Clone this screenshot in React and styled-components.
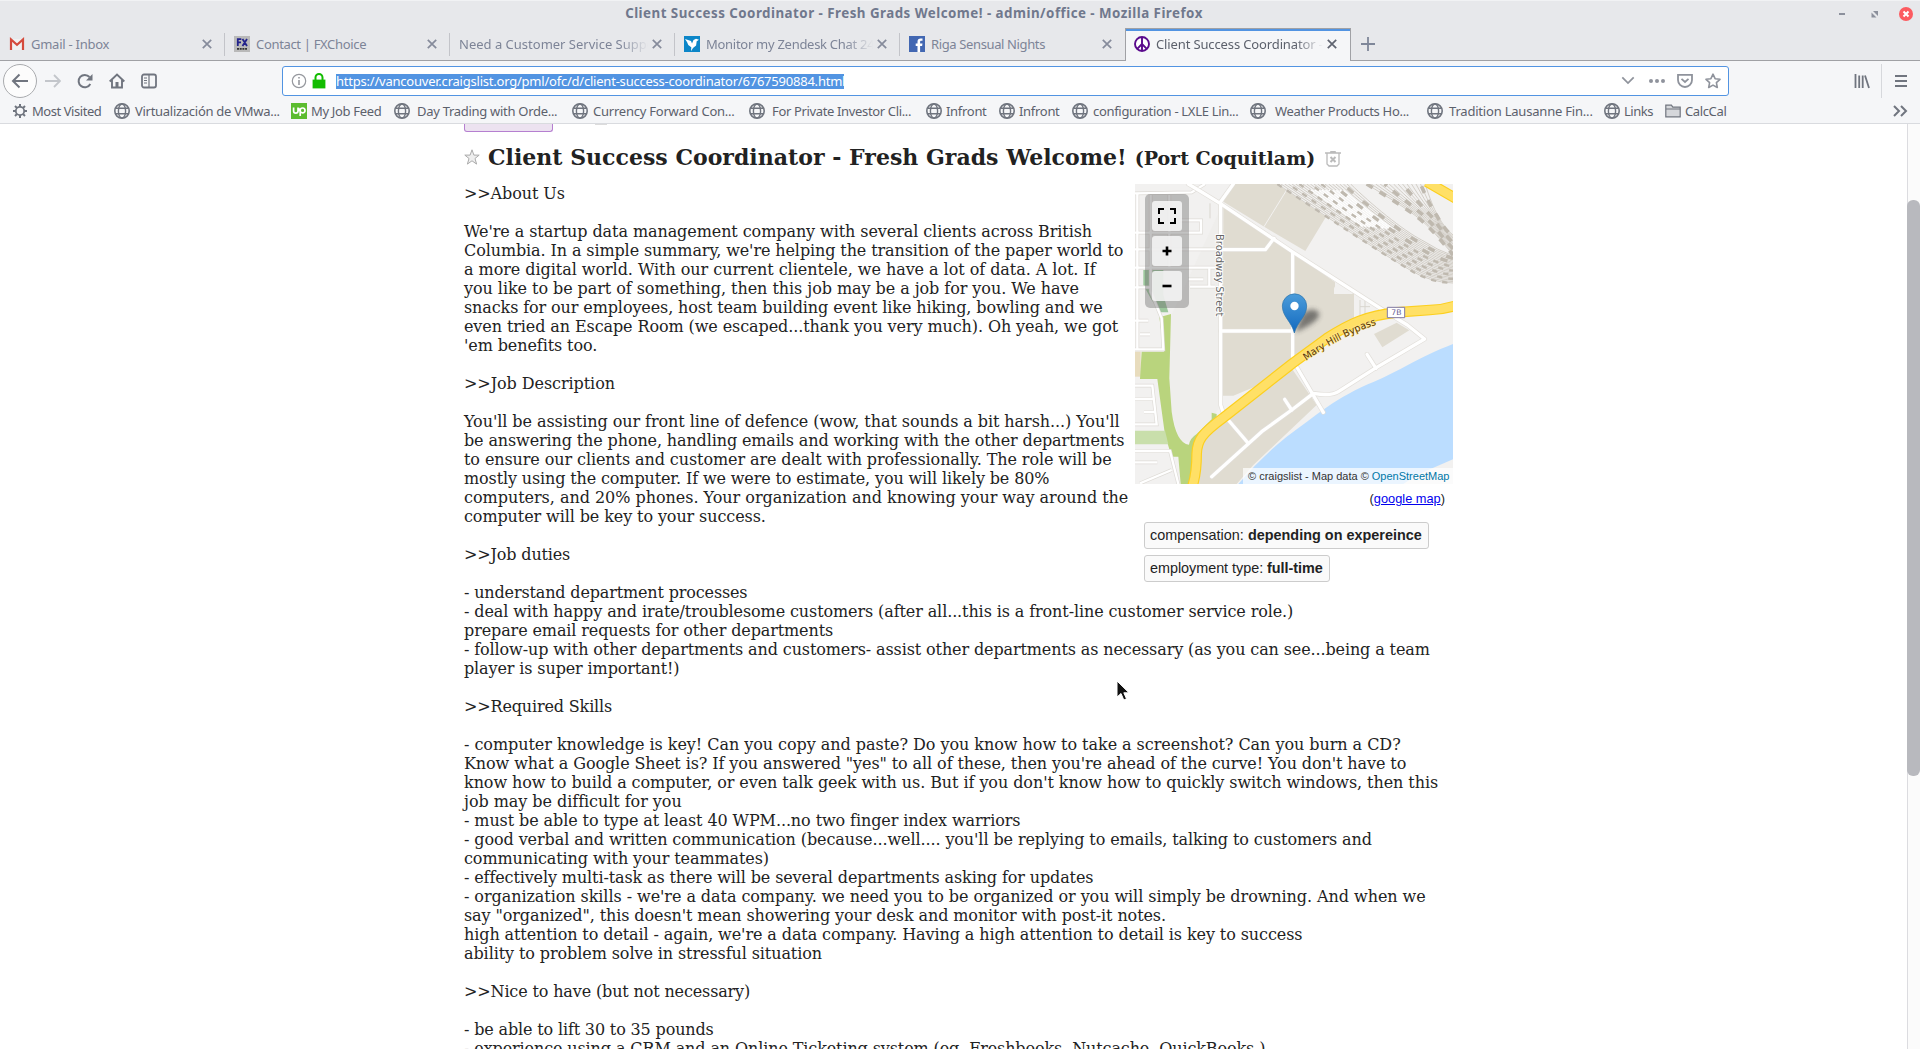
import React from "react";
import styled, { createGlobalStyle, css } from "styled-components";

const Global = createGlobalStyle`
  * { box-sizing: border-box; }
  body { margin: 0; overflow: hidden; background: #fff; }
`;
const ui = css`font-family: "Noto Sans", sans-serif;`;
const Window = styled.div`
  width: 1920px; height: 1049px; overflow: hidden; display: flex; flex-direction: column;
  ${ui} font-size: 13px; color: #5c616c; background: #fff;
`;
const TitleBar = styled.header`
  height: 28px; flex: none; background: #e7e8eb; border-top: 1px solid #f1f2f4;
  display: grid; grid-template-columns: 1fr auto; align-items: start;
`;
const WindowTitle = styled.div`
  font-weight: 700; font-size: 13.33px; letter-spacing: .48px; color: #70788d; text-align: center; white-space: pre; line-height: 25px;
  width: 1828px;
`;
const Controls = styled.div`display: flex; align-items: center; height: 27px;`;
const TabStrip = styled.nav`
  height: 33px; flex: none; display: flex; background: linear-gradient(#a0a1a5, #a0a1a5) 0 100% / 100% 1px no-repeat #e7e8eb;
`;
const Tab = styled.div`
  width: 225px; height: 33px; display: flex; align-items: center; padding: 0 13px 1px 9px; color: #7d8497;
  ${(p) => p.$active ? css`
    background: #f5f6f8; border: 1px solid #a0a1a5; border-bottom: 0; box-shadow: inset 0 2px #5294e2; color: #5c616c; width: 226px; padding-left: 8px; padding-bottom: 2px;
  ` : css`
    background: ${p.$last ? "none" : "linear-gradient(#c3c4c9,#c3c4c9) 100% 5px / 1px 23px no-repeat"};
  `}
`;
const TabLabel = styled.span`
  flex: 1; min-width: 0; overflow: hidden; white-space: nowrap; margin: 0 4px 0 ${(p) => (p.$bare ? "0" : "6px")};
  line-height: 20px; letter-spacing: ${(p) => p.$ls}px;
  ${(p) => p.$fade && css`mask-image: linear-gradient(90deg, #000 calc(100% - 28px), transparent);`}
`;
const NewTab = styled.div`width: 33px; padding-bottom: 2px; display: flex; justify-content: center; align-items: center;`;
const NavBar = styled.div`
  height: 38px; flex: none; background: #f5f6f8; display: flex; align-items: center; padding: 2px 0 0 3px;
`;
const Back = styled.div`
  width: 34px; height: 34px; border-radius: 50%; background: #fcfcfc; border: 1px solid #a9abae; display: grid; place-items: center;
`;
const NavIcon = styled.div`width: ${(p) => p.$w}px; display: flex; justify-content: center;`;
const UrlBar = styled.div`
  margin-left: 117px; width: 1447px; height: 30px; border: 1px solid #5294e2; border-radius: 3px; background: #fff;
  display: flex; align-items: center; padding-left: 8px; gap: 4px;
`;
const Url = styled.span`
  background: #5294e2; color: #fff; line-height: 15px; height: 15px; margin-left: 5px; white-space: nowrap; width: 508px; letter-spacing: -.22px;
`;
const UrlIcons = styled.div`margin-left: auto; display: flex; width: 114px;`;
const Spacer = styled.div`flex: 1;`;
const Divider = styled.i`width: 1px; height: 34px; background: #d6d8dc;`;
const Bookmarks = styled.div`
  height: 25px; flex: none; background: #f5f6f8; border-bottom: 1px solid #d9dbdf; display: flex; align-items: center; padding-left: 12px;
`;
const Bookmark = styled.div`
  width: ${(p) => p.$w}px; display: flex; align-items: center; gap: ${(p) => p.$gap}px; white-space: nowrap; flex: none;
  line-height: 18px; letter-spacing: ${(p) => p.$ls}px; svg { flex: none; }
`;
const Viewport = styled.div`flex: 1; min-height: 0; display: flex;`;
const Page = styled.main`
  width: 1907px; padding-left: 464px; overflow: hidden; color: #222; font-family: "DejaVu Serif", serif; font-size: 16px; line-height: 19px;
`;
const ReplyRow = styled.div`display: flex; gap: 42px; height: 8px;`;
const ReplyButton = styled.div`width: 89px; height: 8px; background: #ece2f0; border: 1px solid #b57fd0; border-top: 0; border-radius: 0 0 3px 3px;`;
const Nub = styled.div`width: 12px; height: 1px; background: #dcdcdc;`;
const Heading = styled.h2`
  margin: 0; height: 52px; padding-top: 10px; display: flex; align-items: baseline; white-space: pre; font-size: 22px; line-height: 30px; font-weight: 700;
  letter-spacing: .02px;
`;
const Star = styled.span`width: 24px; align-self: flex-start; padding-top: 7px; line-height: 0;`;
const Trash = styled.span`align-self: flex-start; padding-top: 9px; line-height: 0;`;
const Place = styled.small`font-size: 19px; margin: 0 10px 0 8px;`;
const Posting = styled.section`width: 989px;`;
const Intro = styled.div`display: grid; grid-template-columns: 671px 318px; height: 399px;`;
const Side = styled.aside`font-family: "Liberation Sans", Arial, sans-serif;`;
const MapBox = styled.div`
  height: 300px; display: grid; > * { grid-area: 1 / 1; }
`;
const Credit = styled.div`
  align-self: end; justify-self: end; height: 16px; width: 210px; padding: 0 5px; line-height: 16px; font-size: 11px; color: #333;
  background: rgba(255,255,255,.7); white-space: nowrap; a { color: #0078a8; }
`;
const MapControls = styled.div`
  margin: 10px 0 0 10px; width: 44px; height: 114px; border-radius: 5px; background: rgba(110,110,110,.42); padding: 7px; display: flex; flex-direction: column; gap: 5px;
`;
const MapButton = styled.div`
  height: 30px; border-radius: 3px; background: rgba(245,245,245,.88); display: grid; place-items: center; color: #000;
`;
const MapLink = styled.p`
  margin: 7px 8px 0 0; font-size: 12.8px; line-height: 16px; text-align: right; a { color: #0000ee; text-decoration: underline; }
`;
const Attrs = styled.div`padding: 15px 0 0 9px; display: flex; flex-direction: column; align-items: flex-start; gap: 6px;`;
const Attr = styled.span`
  border: 1px solid #ccc; border-radius: 3px; background: #fafafa; padding: 0 6px 0 5px; height: 27px; line-height: 25px; font-size: 14.4px; white-space: nowrap;
  letter-spacing: ${(p) => p.$ls}px;
`;
const Line = styled.div`white-space: pre; height: 19px; letter-spacing: ${(p) => p.$ls}px;`;
const ScrollTrack = styled.div`width: 13px; background: #fbfbfb; border-left: 1px solid #dcdce0; padding-top: 76px;`;
const ScrollThumb = styled.div`width: 13px; height: 576px; margin-left: -1px; border-radius: 6px; background: #b8b9be;`;
const Pointer = styled.svg`position: absolute; left: 1116px; top: 680px;`;

const G = "#70757f";
const Svg = ({ s = 16, w, h, v, children, ...r }) => (
  <svg width={w || s} height={h || s} viewBox={v || "0 0 16 16"} fill="none" stroke={G} strokeWidth="1.8" {...r}>{children}</svg>
);
const Close = ({ c = "#868b9b" }) => <Svg s={10} v="0 0 10 10" stroke={c} strokeWidth="1.7"><path d="M.8.8 9.2 9.2M9.2.8.8 9.2" /></Svg>;
const Globe = () => (
  <Svg strokeWidth="1.4"><circle cx="8" cy="8" r="7.2" strokeWidth="1.6" /><ellipse cx="8" cy="8" rx="3.6" ry="7" /><path d="M1.800 5.200h12.400M1.800 10.800h12.400" /></Svg>
);
const Gear = () => (
  <Svg><circle cx="8" cy="8" r="4.200" /><path strokeWidth="2" d="M8 1v3M8 12v3M1 8h3M12 8h3M3 3l2.100 2.100M10.900 10.900 13 13M3 13l2.100-2.100M10.900 5.100 13 3" /></Svg>
);
const Folder = () => <Svg strokeWidth="1.2"><path fill="#d5d7db" d="M.8 13.8V2.200h5.600l1.400 2h7.400v9.600zM.8 6h14.400" /></Svg>;
const Up = () => (
  <Svg stroke="#fff" strokeWidth="1.7"><path fill="#5bbc2f" stroke="none" d="M0 0h16v16H0z" /><path d="M2.600 4.500V8a2.200 2.200 0 0 0 4.400 0V4.500M9.200 13V7.200a2.400 2.400 0 1 1 2.400 2.600C9.600 9.800 8.200 7 7.600 5" /></Svg>
);
const favicons = {
  gmail: <Svg stroke="#d54b3d" strokeWidth="2.2"><path fill="#f1f1f1" stroke="none" d="M1 3h14v11H1z" /><path d="M2 14V3.500l6 5.300 6-5.300V14" /></Svg>,
  fx: <Svg stroke="#22228c" strokeWidth="1.8"><path fill="#b9b9b9" stroke="none" d="M0 0h16v16H0z" /><path d="M3.800 10V3.200h3.500M3.800 6.400H7M8.500 3l4.500 7M13 3l-4.500 7" /><path stroke="#333" strokeDasharray="2 .7" d="M3 12.800h10" /></Svg>,
  bird: <Svg stroke="none"><path fill="#0c86c8" d="M0 0h16v16H0z" /><path fill="#fff" d="M1 3l6 2 1 2.600L9.500 4 12 2.700l3 1-2.300 1.500-.6 4.200L9 12l-2 3.200.3-4L4.300 9 3 6z" /></Svg>,
  fb: <Svg stroke="none"><path fill="#4267b2" d="M0 0h16v16H0z" /><path fill="#fff" d="M8.500 16V10H6.700V7.600h1.800V5.800c0-2.300 1.200-3.300 3.200-3.300h1.800v2.300h-1.200c-.9 0-1.200.4-1.200 1.200v1.600h2.400l-.4 2.400h-2V16z" /></Svg>,
  peace: <Svg stroke="#5a0a8c" strokeWidth="1.9"><circle cx="8" cy="8" r="7" fill="#fff" /><path d="M8 1v14M8 8l-4.800 4.800M8 8l4.800 4.800" /></Svg>,
};
const tabs = [
  ["Gmail - Inbox", "gmail", -0.25], ["Contact | FXChoice", "fx", -0.33], ["Need a Customer Service Support", null, 0, 1],
  ["Monitor my Zendesk Chat 24/7", "bird", -0.28, 1], ["Riga Sensual Nights", "fb", -0.37], ["Client Success Coordinator - Fresh", "peace", -0.13, 1],
];
const bookmarks = [
  [Gear, "Most Visited", 12, 32, -0.45], [Globe, "Virtualización de VMwa...", 114, 135, -0.28], [Up, "My Job Feed", 291, 311, -0.33],
  [Globe, "Day Trading with Orde...", 394, 417, -0.29], [Globe, "Currency Forward Con...", 572, 593, -0.23], [Globe, "For Private Investor Cli...", 749, 772, -0.35],
  [Globe, "Infront", 926, 946, -0.3], [Globe, "Infront", 999, 1019, -0.3], [Globe, "configuration - LXLE Lin...", 1072, 1093, -0.31],
  [Globe, "Weather Products Ho...", 1250, 1275, -0.3], [Globe, "Tradition Lausanne Fin...", 1427, 1449, -0.2], [Globe, "Links", 1604, 1624, -0.5], [Folder, "CalcCal", 1665, 1685, -0.37],
];

const introLines = [
  [">>About Us", -0.1], [""],
  ["We're a startup data management company with several clients across British", -0.08],
  ["Columbia. In a simple summary, we're helping the transition of the paper world to", -0.105],
  ["a more digital world. With our current clientele, we have a lot of data. A lot. If", -0.05],
  ["you like to be part of something, then this job may be a job for you. We have", -0.06],
  ["snacks for our employees, host team building event like hiking, bowling and we", -0.11],
  ["even tried an Escape Room (we escaped...thank you very much). Oh yeah, we got", -0.095],
  ["'em benefits too.", -0.1], [""],
  [">>Job Description", -0.07], [""],
  ["You'll be assisting our front line of defence (wow, that sounds a bit harsh...) You'll", -0.07],
  ["be answering the phone, handling emails and working with the other departments", -0.125],
  ["to ensure our clients and customer are dealt with professionally. The role will be", -0.09],
  ["mostly using the computer. If we were to estimate, you will likely be 80%", -0.13],
  ["computers, and 20% phones. Your organization and knowing your way around the", -0.03],
  ["computer will be key to your success.", -0.1], [""],
  [">>Job duties", -0.15], [""],
];
const detailLines = [
  ["- understand department processes", -0.15],
  ["- deal with happy and irate/troublesome customers (after all...this is a front-line customer service role.)", -0.105],
  ["prepare email requests for other departments", -0.11],
  ["- follow-up with other departments and customers- assist other departments as necessary (as you can see...being a team", -0.115],
  ["player is super important!)", -0.12], [""],
  [">>Required Skills", -0.15], [""],
  ["- computer knowledge is key! Can you copy and paste? Do you know how to take a screenshot? Can you burn a CD?", -0.045],
  ["Know what a Google Sheet is? If you answered \"yes\" to all of these, then you're ahead of the curve! You don't have to", -0.095],
  ["know how to build a computer, or even talk geek with us. But if you don't know how to quickly switch windows, then this", -0.07],
  ["job may be difficult for you", -0.05],
  ["- must be able to type at least 40 WPM...no two finger index warriors", -0.09],
  ["- good verbal and written communication (because...well.... you'll be replying to emails, talking to customers and", -0.095],
  ["communicating with your teammates)", -0.1],
  ["- effectively multi-task as there will be several departments asking for updates", -0.12],
  ["- organization skills - we're a data company. we need you to be organized or you will simply be drowning. And when we", -0.065],
  ["say \"organized\", this doesn't mean showering your desk and monitor with post-it notes.", -0.1],
  ["high attention to detail - again, we're a data company. Having a high attention to detail is key to success", -0.095],
  ["ability to problem solve in stressful situation", -0.09], [""],
  [">>Nice to have (but not necessary)", -0.14], [""],
  ["- be able to lift 30 to 35 pounds", -0.15],
  ["- experience using a CRM and an Online Ticketing system (eg. Freshbooks, Nutcache, QuickBooks )", -0.11],
];
const Lines = ({ lines }) => <div>{lines.map(([t, ls = 0], i) => <Line key={i} $ls={ls}>{t}</Line>)}</div>;

const minorRoads = [
  "M45 55L215 52L255 27", "M45 173H243V136H180", "M45 223H300", "M45 278H285M45 337H92M52 55V520M92 60V350L125 430L130 523H45", "M148 60V280M205 313H250M210 335H285M268 280V335",
  "M45 437H85M60 478H90M45 632H97L110 748H45M45 672H98M72 711H105", "M45 828H150L175 927M45 862H112M60 925L155 885",
];
const roads = [
  "M205 27L240 48L305 88L520 232L800 412L862 450L914 492L765 580L655 650Q635 664 580 655L515 705L425 770L275 905",
  "M340 27L302 80V690L312 720L385 805", "M302 224H436L462 190", "M518 235V555L610 712", "M302 468H518", "M494 673L515 705M741 538L768 580",
];
const mainYard = Array.from({ length: 21 }, (_, i) => {
  const t = i / 20;
  return `M${472 + 220 * t} 27C${620 + 130 * t} ${125 - 40 * t} ${780 + 70 * t} ${232 - 65 * t} ${870 + 35 * t} ${285 - 90 * t}Q${930 + 25 * t} ${322 - 95 * t} 999 ${324 - 82 * t}`;
});
const sideYard = Array.from({ length: 14 }, (_, i) => {
  const t = i / 13;
  return `M${740 + 175 * t} 27C${800 + 130 * t} ${65 + 5 * t} ${880 + 60 * t} ${110 - 10 * t} ${925 + 28 * t} ${155 - 35 * t}Q${955 + 18 * t} ${185 - 25 * t} 999 ${240 - 60 * t}`;
});

function AreaMap() {
  return (
    <svg width="318" height="300" viewBox="45 27 954 900" fill="none">
      <defs>
        <linearGradient id="pin" x2="0" y2="1"><stop stopColor="#4b9cda" /><stop offset="1" stopColor="#1269bf" /></linearGradient>
        <filter id="soft" x="-50%" y="-50%" width="200%" height="200%"><feGaussianBlur stdDeviation="8" /></filter>
      </defs>
      <path fill="#f2f1f0" d="M45 27h954v900H45z" />
      <path fill="#efeeec" d="M150 430L302 100V690L270 740L215 800H180L150 700z" />
      <path fill="#e0dcd1" d="M335 27H470L618 125L556 228L460 172L310 80zM310 95L520 232L645 322V355H702V440L600 500L430 625L340 662H308zM240 800L320 735L515 580L590 690L400 870L350 927H235zM762 477L830 443L868 466L787 517z" />
      <path fill="#f2f1f0" d="M650 325L700 357H642V340z" />
      <path stroke="#f2f1f0" strokeWidth="3" d="M500 45L432 155" />
      <path stroke="#d9d6cf" strokeWidth="3" d="M715 360L790 400M720 375V420M735 375V420M720 395H750M270 85V130" />
      <path fill="#e8dcbd" d="M45 530H62V605H45z" />
      <path fill="#9cc79c" d="M70 285H130V360L145 412H120L95 375L70 330z" />
      <path fill="#b9d47d" d="M118 427L153 417L148 610L155 710Q168 805 207 809Q210 790 230 777L275 733L275 713L290 717L290 740L240 800L225 927H182L175 845H155L135 780L112 612H60L65 530H132z" />
      <path fill="#c9dfab" d="M45 767H135L145 808H45z" />
      <path fill="#bbddff" d="M999 507C900 545 835 590 762 620C650 665 590 720 500 785Q420 850 355 927H890L999 890z" />
      <path fill="#f2f1f0" d="M890 900L999 853V927H850z" />
      {[...mainYard, ...sideYard].map((d) => <path key={d} d={d} stroke="#cdc8c0" strokeWidth="2.600" />)}
      {mainYard.filter((_, i) => i > 6 && i < 17).map((d) => <path key={d} d={d} stroke="#fff" strokeWidth="4" strokeDasharray="190 1200" strokeDashoffset="-30" />)}
      {mainYard.filter((_, i) => i % 3 === 0).map((d, i) => <path key={d} d={d} stroke="#bfb9af" strokeWidth={i > 4 ? 10 : 7} strokeDasharray={i > 4 ? "22 38" : "16 18"} strokeDashoffset={i * 17} />)}
      {sideYard.filter((_, i) => i % 4 === 0).map((d, i) => <path key={d} d={d} stroke="#bfb9af" strokeWidth="11" strokeDasharray="22 24" strokeDashoffset={i * 13} />)}
      {minorRoads.map((d) => <path key={d} d={d} stroke="#dedbd6" strokeWidth="11" />)}
      {minorRoads.map((d) => <path key={d} d={d} stroke="#fff" strokeWidth="7" />)}
      {roads.map((d) => <path key={d} d={d} stroke="#e2dfda" strokeWidth="14" strokeLinejoin="round" strokeLinecap="round" />)}
      {roads.map((d) => <path key={d} d={d} stroke="#fff" strokeWidth="10" strokeLinejoin="round" strokeLinecap="round" />)}
      {[["#fccf1f", 32], ["#ffe066", 25]].map(([c, w]) => <path key={c} stroke={c} strokeWidth={w} d="M1010 391Q970 404 930 405L830 412C740 422 690 445 620 490L515 567L310 728C245 776 232 795 230 835Q230 900 215 940M920 20L1010 72" />)}
      <path fill="#fff" stroke="#807aa8" strokeWidth="3" d="M802 397h52v31h-52z" />
      <text x="829" y="421" textAnchor="middle" fontSize="23" fontFamily="DejaVu Sans, sans-serif" fill="#5e5890">7B</text>
      <path id="bypass" d="M558 557Q665 482 775 447" />
      <text fontSize="30" fontFamily="DejaVu Sans, sans-serif" fill="#5a3608" stroke="#ffe787" strokeWidth="4" paintOrder="stroke"><textPath href="#bypass" textLength="238" lengthAdjust="spacingAndGlyphs">Mary Hill Bypass</textPath></text>
      <text transform="translate(289 177) rotate(90)" fontSize="30" textLength="247" lengthAdjust="spacingAndGlyphs" fontFamily="DejaVu Sans, sans-serif" fill="#666" stroke="#fff" strokeWidth="5" paintOrder="stroke">Broadway Street</text>
      <path d="M525 472L548 415Q580 392 598 415Q600 440 525 472" fill="#333" opacity=".6" filter="url(#soft)" />
      <path d="M523 474C515 440 487 425 487 393a36 36 0 0 1 73 0C560 425 532 440 523 474z" fill="url(#pin)" stroke="#2b72aa" strokeWidth="2" />
      <circle cx="523.5" cy="393" r="12.5" fill="#fff" />
    </svg>
  );
}

export default function App() {
  return (
    <Window>
      <Global />
      <TitleBar>
        <WindowTitle>Client Success Coordinator - Fresh Grads Welcome! - admin/office - Mozilla Firefox</WindowTitle>
        <Controls>
          <Svg w={92} h={27} v="0 0 92 27" stroke="#8c909c">
            <path d="M11 13h6" strokeWidth="2" /><path fill="#8c909c" stroke="none" d="M45 10h5v5zM43.500 11.500v5h5z" />
            <circle cx="78" cy="13" r="7" fill="#fc5b60" stroke="none" /><path stroke="#fff" strokeWidth="2" d="M75.500 10.500l5 5M80.500 10.500l-5 5" />
          </Svg>
        </Controls>
      </TitleBar>
      <TabStrip>
        {tabs.map(([t, i, ls, fade], n) => (
          <Tab key={t} $active={n === 5} $last={n === 4}>
            {favicons[i]}<TabLabel $bare={!i} $fade={fade} $ls={ls}>{t}</TabLabel><Close c={n === 5 ? "#5f6470" : undefined} />
          </Tab>
        ))}
        <NewTab><Svg s={14} v="0 0 14 14" stroke="#7f8799"><path d="M7 0v14M0 7h14" /></Svg></NewTab>
      </TabStrip>
      <NavBar>
        <Back><Svg s={18} v="0 0 18 18" strokeWidth="2"><path d="M17 9H2M8.500 2.500L2 9l6.500 6.500" /></Svg></Back>
        <NavIcon $w={32}><Svg stroke="#c3c6cb"><path d="M0 8h15M9 2l6 6-6 6" /></Svg></NavIcon>
        <NavIcon $w={32}><Svg strokeWidth="2"><path d="M13.300 11a6.200 6.200 0 1 1-.8-7" /><path fill={G} stroke="none" d="M15.500 1v6.500H9z" /></Svg></NavIcon>
        <NavIcon $w={32}><Svg strokeWidth="1.9"><path d="M.7 8.500L8 1.500l7.300 7M3 7v7.500h10V7" /><path fill={G} stroke="none" d="M6.500 9h3v5h-3z" /></Svg></NavIcon>
        <NavIcon $w={32}><Svg><rect x="1" y="1.500" width="14" height="13" rx="2" /><path d="M8 2v12M3 5h3M3 7.500h3M3 10h3" strokeWidth="1.200" /></Svg></NavIcon>
        <UrlBar>
          <Svg stroke="#96989e" strokeWidth="1.200"><circle cx="8" cy="8" r="6.700" /><path d="M8 7v5M8 4v1.600" strokeWidth="1.600" /></Svg>
          <Svg stroke="#12bc00"><rect x="2.500" y="7.500" width="11" height="7" fill="#12bc00" /><path d="M4.500 7V4.500a3.500 3.500 0 0 1 7 0V7" strokeWidth="2" /></Svg>
          <Url>https://vancouver.craigslist.org/pml/ofc/d/client-success-coordinator/6767590884.html</Url>
          <UrlIcons>
            <NavIcon $w={28}><Svg s={14} stroke="#8f939c"><path d="M1.500 5L8 11.500 14.500 5" strokeWidth="2" /></Svg></NavIcon>
            <NavIcon $w={29}><Svg stroke="none" fill="#8f939c"><circle cx="2" cy="8" r="2" /><circle cx="8" cy="8" r="2" /><circle cx="14" cy="8" r="2" /></Svg></NavIcon>
            <NavIcon $w={28}><Svg stroke="#8f939c"><path d="M1 1.800h14V7A7 7 0 0 1 1 7z" /><path d="M4.500 5.800L8 9l3.500-3.200" /></Svg></NavIcon>
            <NavIcon $w={28}><Svg stroke="#8f939c" strokeWidth="1.600"><path d="M8 1.200l2.100 4.500 4.900.6-3.600 3.300.9 4.900L8 12.100l-4.300 2.400.9-4.900L1 6.300l4.900-.6z" strokeLinejoin="round" /></Svg></NavIcon>
          </UrlIcons>
        </UrlBar>
        <Spacer />
        <NavIcon $w={39}><Svg><path d="M1.500 1v14M5.200 2.500V15M8.700 2.500V15M11 2.500L15 15" /></Svg></NavIcon>
        <Divider />
        <NavIcon $w={38}><Svg v="0 0 12 14" h={14} w={12} strokeWidth="2"><path d="M0 2h12M0 7h12M0 12h12" /></Svg></NavIcon>
      </NavBar>
      <Bookmarks>
        {bookmarks.map(([Icon, t, x, tx, ls], n) => (
          <Bookmark key={x} $w={(bookmarks[n + 1]?.[2] ?? 1892) - x} $gap={tx - x - 16} $ls={ls}><Icon /><span>{t}</span></Bookmark>
        ))}
        <Svg strokeWidth="2"><path d="M2 3l5 5-5 5M9 3l5 5-5 5" /></Svg>
      </Bookmarks>
      <Viewport>
        <Page>
          <ReplyRow><ReplyButton /><Nub /></ReplyRow>
          <Heading>
            <Star><Svg stroke="#aaa" strokeWidth="1" fill="#eee"><path d="M8 .8l1.900 5.300h5.300L11 9.500l1.600 5.600L8 11.800l-4.600 3.300L5 9.500.8 6.100h5.300z" /></Svg></Star>
            Client Success Coordinator - Fresh Grads Welcome!<Place>(Port Coquitlam)</Place>
            <Trash><Svg stroke="#bbb" strokeWidth="1.300"><path d="M0 2h16M2 2.500V13l2 2h8l2-2V2.500M5 2l1-1.500h4L11 2" /><path d="M5.500 6l5 5M10.500 6l-5 5" strokeWidth="2" /></Svg></Trash>
          </Heading>
          <Posting>
            <Intro>
              <Lines lines={introLines} />
              <Side>
                <MapBox>
                  <AreaMap />
                  <MapControls>
                    <MapButton><Svg v="0 0 18 16" w={18} h={16} stroke="#000" strokeWidth="2"><path d="M1 6V1h5M12 1h5v5M17 10v5h-5M6 15H1v-5" /></Svg></MapButton>
                    <MapButton><Svg s={10} v="0 0 10 10" stroke="#000" strokeWidth="2.600"><path d="M5 .5v9M.5 5h9" /></Svg></MapButton>
                    <MapButton><Svg s={10} v="0 0 10 10" stroke="#000" strokeWidth="2.600"><path d="M.5 5h9" /></Svg></MapButton>
                  </MapControls>
                  <Credit>© craigslist - Map data © <a>OpenStreetMap</a></Credit>
                </MapBox>
                <MapLink>(<a>google map</a>)</MapLink>
                <Attrs>
                  <Attr $ls={0.02}>compensation: <b>depending on expereince</b></Attr>
                  <Attr $ls={-0.03}>employment type: <b>full-time</b></Attr>
                </Attrs>
              </Side>
            </Intro>
            <Lines lines={detailLines} />
          </Posting>
        </Page>
        <ScrollTrack><ScrollThumb /></ScrollTrack>
      </Viewport>
      <Pointer width="14" height="22" viewBox="0 0 14 22"><path d="M1 1v16l4-3.500 2.800 6.500 2.700-1.200-2.700-6H13z" fill="#111" stroke="#fff" strokeWidth="1" /></Pointer>
    </Window>
  );
}
